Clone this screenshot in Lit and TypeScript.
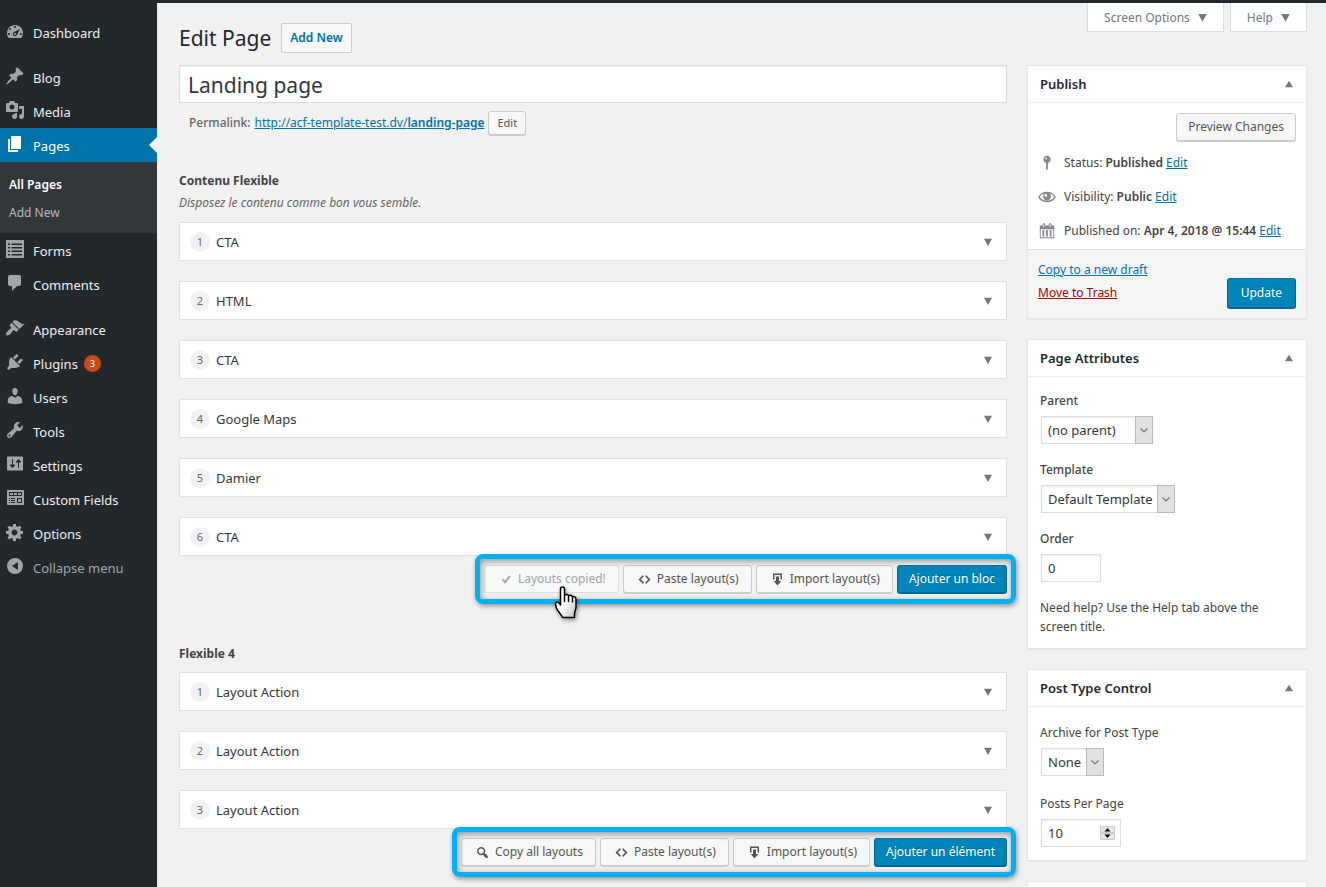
import { LitElement, html, css, svg, nothing } from "lit";
import { customElement, property } from "lit/decorators.js";
import { classMap } from "lit/directives/class-map.js";

const ICONS: Record<string, string> = {
  dashboard:
    "M3.76 17.01h12.48C17.34 15.63 18 13.9 18 12c0-4.41-3.58-8-8-8s-8 3.59-8 8c0 1.9.66 3.63 1.76 5.01zM9 6c0-.55.45-1 1-1s1 .45 1 1-.45 1-1 1-1-.45-1-1zM4 8c0-.55.45-1 1-1s1 .45 1 1-.45 1-1 1-1-.45-1-1zm4.52 3.4c.84-.83 6.51-3.5 6.51-3.5s-2.66 5.68-3.49 6.51c-.84.84-2.18.84-3.02 0-.83-.83-.83-2.18 0-3.01zM3 13c0-.55.45-1 1-1s1 .45 1 1-.45 1-1 1-1-.45-1-1zm6 0c0 .55.45 1 1 1s1-.45 1-1-.45-1-1-1-1 .45-1 1zm6 0c0-.55.45-1 1-1s1 .45 1 1-.45 1-1 1-1-.45-1-1z",
  pin:
    "M10.44 3.02l1.82-1.82 6.36 6.35-1.83 1.82c-1.05-.68-2.48-.57-3.41.36l-.75.75c-.92.93-1.04 2.35-.35 3.41l-1.83 1.82-2.41-2.41-2.8 2.79c-.42.42-3.38 2.71-3.8 2.29s1.86-3.39 2.28-3.81l2.79-2.79L4.1 9.36l1.83-1.82c1.05.69 2.48.57 3.4-.36l.75-.75c.93-.92 1.05-2.35.36-3.41z",
  media:
    "M13 11V4c0-.55-.45-1-1-1h-1.67L9 1H5L3.67 3H2c-.55 0-1 .45-1 1v7c0 .55.45 1 1 1h10c.55 0 1-.45 1-1zM7 4.5c1.38 0 2.5 1.12 2.5 2.5S8.38 9.5 7 9.5 4.5 8.38 4.5 7 5.62 4.5 7 4.5zM14 6h5v10.5c0 1.38-1.12 2.5-2.5 2.5S14 17.88 14 16.5s1.12-2.5 2.5-2.5c.17 0 .34.02.5.05V9h-3V6zm-4 8.05V13h2v3.5c0 1.38-1.12 2.5-2.5 2.5S7 17.88 7 16.5 8.12 14 9.5 14c.17 0 .34.02.5.05z",
  page: "M6 15V2h10v13H6zm-1 1h8v2H3V5h2v11z",
  forms:
    "M1 1h18v18H1V1zm2 3.500v1.500h2V4.500H3zm3.500 0v1.500H17V4.500H6.500zM3 8v1.500h2V8H3zm3.500 0v1.500H17V8H6.500zM3 11.500V13h2v-1.500H3zm3.500 0V13H17v-1.500H6.500zM3 15v1.500h2V15H3zm3.500 0v1.500H17V15H6.500z",
  comment:
    "M5 2h9c1.100 0 2 .9 2 2v7c0 1.100-.9 2-2 2h-2l-5 5v-5H5c-1.100 0-2-.9-2-2V4c0-1.100.9-2 2-2z",
  brush:
    "M14.48 11.06L7.41 3.99l1.5-1.5c.5-.56 2.3-.47 3.51.32 1.21.8 1.43 1.28 2.91 2.1 1.18.64 2.45 1.26 4.45.85zm-.71.71L6.7 4.7 4.93 6.47c-.39.39-.39 1.02 0 1.41l1.06 1.06c.39.39.39 1.03 0 1.42-.6.6-1.43 1.11-2.21 1.69-.35.26-.7.53-1.01.84C1.43 14.23.4 16.08 1.4 17.07c.99 1 2.84-.03 4.18-1.36.31-.31.58-.66.85-1.02.57-.78 1.08-1.61 1.69-2.21.39-.39 1.02-.39 1.41 0l1.06 1.06c.39.39 1.02.39 1.41 0z",
  plug:
    "M13.11 4.36L9.87 7.6 8 5.73l3.24-3.24c.35-.34 1.05-.2 1.56.32.52.51.66 1.21.31 1.55zm-8 1.77l.91-1.12 9.01 9.01-1.19.84c-.71.71-2.63 1.16-3.82 1.16H6.14L4.9 17.26c-.59.59-1.54.59-2.12 0-.59-.58-.59-1.53 0-2.12l1.24-1.24v-3.88c0-1.13.4-3.19 1.09-3.89zm7.26 3.97l3.24-3.24c.34-.35 1.04-.21 1.55.31.52.51.66 1.21.31 1.55l-3.24 3.25z",
  user:
    "M10 9.25c-2.27 0-2.73-3.44-2.73-3.44C7 4.02 7.82 2 9.97 2c2.16 0 2.98 2.02 2.71 3.81 0 0-.41 3.44-2.68 3.44zm0 2.57L12.72 10c2.39 0 4.52 2.33 4.52 4.53v2.49s-3.65 1.13-7.24 1.13c-3.65 0-7.24-1.13-7.24-1.13v-2.49c0-2.25 1.94-4.48 4.47-4.48z",
  wrench:
    "M16.68 9.77c-1.34 1.34-3.3 1.67-4.95.99l-5.41 6.52c-.99.99-2.59.99-3.58 0s-.99-2.59 0-3.57l6.52-5.42c-.68-1.65-.35-3.61.99-4.95 1.28-1.28 3.12-1.62 4.72-1.06l-2.89 2.89 2.82 2.82 2.86-2.87c.53 1.58.18 3.39-1.08 4.65zM3.81 16.21c.4.39 1.04.39 1.43 0 .4-.4.4-1.04 0-1.43-.39-.4-1.03-.4-1.43 0-.39.39-.39 1.03 0 1.43z",
  sliders:
    "M18 15.500V3.500c0-.55-.45-1-1-1H3c-.55 0-1 .45-1 1v12c0 .55.45 1 1 1h14c.55 0 1-.45 1-1zM8 10.500h2v1L7.500 14 5 11.500v-1h2V5h1v5.500zm5-2h-2v-1L13.500 5 16 7.500v1h-2V14h-1V8.500z",
  fields:
    "M19 16V3c0-.55-.45-1-1-1H3c-.55 0-1 .45-1 1v13c0 .55.45 1 1 1h15c.55 0 1-.45 1-1zM4 4h13v4H4V4zm1 1v2h3V5H5zm4 0v2h3V5H9zm4 0v2h3V5h-3zM4 10h1v1H4zm2 0h4v1H6v-1zm6 0h5v5h-5v-5zM4 12h1v1H4zm2 0h4v1H6v-1zm7-1v3h3v-3h-3zM4 14h1v1H4zm2 0h4v1H6v-1z",
  gear:
    "M18 12h-2.18c-.17.7-.44 1.35-.81 1.93l1.54 1.54-2.1 2.1-1.54-1.54c-.58.36-1.23.63-1.91.79V19H8v-2.18c-.68-.16-1.33-.43-1.91-.79l-1.54 1.54-2.12-2.12 1.54-1.54c-.36-.58-.63-1.23-.79-1.91H1V9.03h2.17c.16-.7.44-1.35.8-1.94L2.43 5.55l2.1-2.1 1.54 1.54c.58-.37 1.24-.64 1.93-.81V2h3v2.18c.68.16 1.33.43 1.91.79l1.54-1.54 2.12 2.12-1.54 1.54c.36.59.64 1.24.8 1.94H18V12zm-8.5 1.5c1.66 0 3-1.34 3-3s-1.34-3-3-3-3 1.34-3 3 1.34 3 3 3z",
  collapse: "M10 2a8 8 0 1 0 0 16 8 8 0 0 0 0-16zm3 4v8l-6-4z",
  status:
    "M14 6c0 1.86-1.28 3.41-3 3.86V16c0 1-2 2-2 2V9.86c-1.72-.45-3-2-3-3.86 0-2.21 1.79-4 4-4s4 1.79 4 4zM8 5c0 .55.45 1 1 1s1-.45 1-1-.45-1-1-1-1 .45-1 1z",
  eye:
    "M19.700 9.800C17.700 6.200 14 4.200 10 4.200S2.300 6.200.3 9.800v.4c2 3.600 5.700 5.600 9.700 5.600s7.700-2 9.700-5.600zM10 14.300c-3.200 0-6.200-1.600-8-4.300 1.200-1.800 2.900-3.100 4.900-3.800-.8.900-1.300 2-1.300 3.300 0 2.400 2 4.400 4.400 4.400s4.400-2 4.400-4.400c0-1.300-.5-2.400-1.300-3.300 2 .7 3.700 2 4.900 3.800-1.800 2.700-4.800 4.300-8 4.300zM8.600 6.600a1.600 1.600 0 1 1 0 3.200 1.600 1.600 0 0 1 0-3.200z",
  calendar:
    "M15 4h3v14H2V4h3V3c0-.83.67-1.500 1.500-1.500S8 2.170 8 3v1h4V3c0-.83.67-1.500 1.500-1.500S15 2.170 15 3v1zM6 3v2.500c0 .28.22.5.5.5s.5-.22.5-.5V3c0-.28-.22-.5-.5-.5S6 2.720 6 3zm7 0v2.500c0 .28.22.5.5.5s.5-.22.5-.5V3c0-.28-.22-.5-.5-.5s-.5.22-.5.5zm4 14V8H3v9h14zM7 16V9H5v7h2zm4 0V9H9v7h2zm4 0V9h-2v7h2z",
  search:
    "M12.14 4.18c1.87 1.87 2.11 4.75.72 6.89.12.1.22.21.36.31.2.16.47.36.81.59.34.24.56.39.66.47.42.31.73.57.94.78.32.32.6.65.84 1 .25.35.44.69.59 1.04.14.35.21.68.18 1-.02.32-.14.59-.36.81s-.49.34-.81.36c-.31.02-.65-.04-.99-.19-.35-.14-.7-.34-1.04-.59-.35-.24-.68-.52-1-.84-.21-.21-.47-.52-.77-.93-.1-.13-.25-.35-.47-.66-.22-.32-.4-.57-.56-.78-.16-.2-.29-.35-.44-.5-2.07 1.09-4.69.76-6.44-.98-2.14-2.15-2.14-5.64 0-7.78 2.15-2.15 5.63-2.15 7.78 0zm-1.41 6.36c1.36-1.37 1.36-3.58 0-4.95-1.37-1.37-3.59-1.37-4.95 0-1.37 1.37-1.37 3.58 0 4.95 1.36 1.37 3.58 1.37 4.95 0z",
  code: "M9 6l-4 4 4 4-1 2-6-6 6-6zm2 8l4-4-4-4 1-2 6 6-6 6z",
  yes: "M15.200 4.500l1.800 1.500-6.800 9H8.800L5 10.400l1.800-1.700 2.600 2.600z",
  download: "M14.010 4v6h2V2H4v8h2.010V4h8zm-2 2v6h3l-5 6-5-6h3V6h4z",
  down: "M5 6h10l-5 9z",
  up: "M5 14h10l-5-8z",
};

const icon = (name: string, size = 20) => html`
  <svg width=${size} height=${size} viewBox="0 0 20 20" fill="currentColor" aria-hidden="true">
    ${svg`<path fill-rule="evenodd" d=${ICONS[name]}></path>`}
  </svg>
`;

const shared = css`
  *,
  *::before,
  *::after {
    box-sizing: border-box;
  }
  svg {
    display: block;
    flex: none;
  }
  h1,
  h2,
  h3,
  p,
  ul,
  ol {
    margin: 0;
    padding: 0;
    list-style: none;
  }
  a {
    color: #0073aa;
  }
  button {
    font-family: inherit;
    cursor: pointer;
  }
  .button {
    display: inline-flex;
    align-items: center;
    height: 28px;
    padding: 0 11px;
    border: 1px solid #ccc;
    border-radius: 3px;
    background: #f7f7f7;
    box-shadow: 0 1px 0 #ccc;
    color: #555;
    font-size: 12px;
    line-height: 18px;
    white-space: nowrap;
  }
  .button.primary {
    border-color: #0073aa #006799 #006799;
    background: #0085ba;
    box-shadow: 0 1px 0 #006799;
    color: #fff;
    text-shadow: 0 -1px 1px #006799;
  }
  .button.small {
    height: 24px;
    padding: 0 8px;
    font-size: 11px;
  }
  .button.large {
    height: 30px;
    padding: 0 13px;
  }
`;

interface MenuEntry {
  label: string;
  icon: string;
  badge?: number;
  current?: boolean;
  gap?: boolean;
  muted?: boolean;
  children?: string[];
}

const MENU: MenuEntry[] = [
  { label: "Dashboard", icon: "dashboard" },
  { label: "Blog", icon: "pin", gap: true },
  { label: "Media", icon: "media" },
  { label: "Pages", icon: "page", current: true, children: ["All Pages", "Add New"] },
  { label: "Forms", icon: "forms" },
  { label: "Comments", icon: "comment" },
  { label: "Appearance", icon: "brush", gap: true },
  { label: "Plugins", icon: "plug", badge: 3 },
  { label: "Users", icon: "user" },
  { label: "Tools", icon: "wrench" },
  { label: "Settings", icon: "sliders" },
  { label: "Custom Fields", icon: "fields" },
  { label: "Options", icon: "gear" },
  { label: "Collapse menu", icon: "collapse", muted: true },
];

@customElement("admin-menu")
export class AdminMenu extends LitElement {
  static styles = [
    shared,
    css`
      :host {
        display: block;
        flex: none;
        width: 157px;
        padding-top: 12px;
        background: #23282d;
      }
      .gap {
        margin-top: 11px;
      }
      .item {
        position: relative;
        display: flex;
        width: 100%;
        height: 34px;
        padding: 0 0 0 5px;
        border: 0;
        background: none;
        color: #eee;
        font-size: 13px;
        line-height: 36px;
        text-decoration: none;
      }
      .item svg {
        margin: 6px 8px 0 0;
        color: #a0a5aa;
      }
      .muted {
        color: #a0a5aa;
      }
      .current {
        background: #0073aa;
        color: #fff;
      }
      .current svg {
        color: #fff;
      }
      .current::after {
        content: "";
        position: absolute;
        top: 9px;
        right: 0;
        border: 8px solid transparent;
        border-right-color: #f1f1f1;
        border-left-width: 0;
      }
      .badge {
        height: 17px;
        min-width: 17px;
        margin: 9px 0 0 6px;
        border-radius: 9px;
        background: #ca4a1f;
        color: #fff;
        font-size: 9px;
        line-height: 17px;
        text-align: center;
      }
      .submenu {
        padding: 9px 0 6px;
        background: #32373c;
      }
      .submenu a {
        display: block;
        padding-left: 9px;
        color: #b4b9be;
        font-size: 12px;
        line-height: 28px;
        text-decoration: none;
      }
      .submenu li:first-child a {
        color: #fff;
        font-weight: 600;
      }
    `,
  ];

  render() {
    return html`
      <nav aria-label="Main menu">
        <ul>
          ${MENU.map(
            (entry) => html`
              <li class=${classMap({ gap: !!entry.gap })}>
                ${entry.muted
                  ? html`<button class="item muted" type="button">
                      ${icon(entry.icon)}${entry.label}
                    </button>`
                  : html`<a class=${classMap({ item: true, current: !!entry.current })} href="#">
                      ${icon(entry.icon)}${entry.label}${entry.badge
                        ? html`<span class="badge">${entry.badge}</span>`
                        : nothing}
                    </a>`}
                ${entry.children
                  ? html`<ul class="submenu">
                      ${entry.children.map((child) => html`<li><a href="#">${child}</a></li>`)}
                    </ul>`
                  : nothing}
              </li>
            `
          )}
        </ul>
      </nav>
    `;
  }
}

@customElement("flexible-field")
export class FlexibleField extends LitElement {
  @property() label = "";
  @property() description = "";
  @property() addLabel = "";
  @property({ type: Array }) layouts: string[] = [];
  @property({ type: Boolean }) copied = false;

  static styles = [
    shared,
    css`
      :host {
        display: block;
      }
      .label {
        color: #444;
        font-size: 12px;
        font-weight: 700;
        line-height: 20px;
      }
      .description {
        margin: 2px 0 9px;
        color: #666;
        font-size: 12px;
        font-style: italic;
        line-height: 20px;
      }
      .layouts {
        display: grid;
        gap: 20px;
        margin-top: 8px;
      }
      .layout {
        display: flex;
        align-items: center;
        height: 39px;
        padding: 0 10px;
        border: 1px solid #e1e1e1;
        background: #fff;
        color: #32373c;
        font-size: 13px;
      }
      .order {
        width: 20px;
        height: 20px;
        margin-right: 6px;
        border-radius: 50%;
        background: #f1f1f1;
        color: #666;
        font-size: 11px;
        line-height: 20px;
        text-align: center;
      }
      .name {
        flex: 1;
      }
      .toggle {
        padding: 0;
        border: 0;
        background: none;
        color: #72777c;
      }
      .actions {
        position: relative;
        display: flex;
        gap: 4px;
        width: max-content;
        margin: 9px 0 0 auto;
      }
      .actions::after {
        content: "";
        position: absolute;
        inset: -11px -9px;
        border: 5px solid #00b0f0;
        border-radius: 8px;
        box-shadow: 1px 2px 5px rgba(0, 0, 0, 0.4), inset 1px 2px 6px rgba(0, 0, 0, 0.4);
        pointer-events: none;
      }
      .button svg {
        margin-right: 5px;
      }
      .icon-button {
        padding: 0 12px 0 13px;
      }
      .button:disabled {
        border-color: #ddd;
        box-shadow: none;
        color: #a0a5aa;
      }
      .pointer {
        position: absolute;
        top: 20px;
        left: 70px;
        z-index: 1;
        filter: drop-shadow(1px 2px 2px rgba(0, 0, 0, 0.4));
      }
    `,
  ];

  private renderPointer() {
    return html`
      <svg class="pointer" width="24" height="34" viewBox="0 0 24 34" aria-hidden="true">
        <defs>
          <linearGradient id="hand" x1="0" y1="0" x2="1" y2="1">
            <stop offset="0.5" stop-color="#fff"></stop>
            <stop offset="1" stop-color="#bbb"></stop>
          </linearGradient>
        </defs>
        <path
          d="M6.500 20V4c0-2.700 4-2.700 4 0v6.500c1-1.500 3.800-1.300 4 .5 1-1.300 3.600-.9 4 1 1-.8 3.500-.3 3.500 2v8c0 3-1.500 4.500-1.500 7v3.500H8.500c-.5-3-4.500-5-6-9.500-1.200-3.500-1.500-6 .5-6 1.800 0 2.500 1.500 3.500 3zM10.500 10.500v6M14.500 11v5.500M18.500 12.500v4.500"
          fill="url(#hand)"
          stroke="#000"
          stroke-width="1.500"
          stroke-linejoin="round"
          stroke-linecap="round"
        ></path>
      </svg>
    `;
  }

  render() {
    return html`
      <h3 class="label">${this.label}</h3>
      ${this.description ? html`<p class="description">${this.description}</p>` : nothing}
      <ol class="layouts">
        ${this.layouts.map(
          (name, i) => html`
            <li class="layout">
              <span class="order">${i + 1}</span>
              <span class="name">${name}</span>
              <button class="toggle" type="button" aria-label="Toggle layout">
                ${icon("down", 16)}
              </button>
            </li>
          `
        )}
      </ol>
      <div class="actions">
        ${this.copied
          ? html`<button class="button icon-button" type="button" disabled>
                ${icon("yes", 15)}Layouts copied!</button
              >${this.renderPointer()}`
          : html`<button class="button icon-button" type="button">
              ${icon("search", 15)}Copy all layouts
            </button>`}
        <button class="button icon-button" type="button">${icon("code", 15)}Paste layout(s)</button>
        <button class="button icon-button" type="button">
          ${icon("download", 15)}Import layout(s)
        </button>
        <button class="button primary" type="button">${this.addLabel}</button>
      </div>
    `;
  }
}

@customElement("meta-box")
export class MetaBox extends LitElement {
  @property() heading = "";

  static styles = [
    shared,
    css`
      :host {
        display: block;
        border: 1px solid #e5e5e5;
        background: #fff;
        box-shadow: 0 1px 1px rgba(0, 0, 0, 0.04);
      }
      .head {
        display: flex;
        align-items: center;
        justify-content: space-between;
        height: 37px;
        padding: 0 9px 0 12px;
        border-bottom: 1px solid #eee;
      }
      .heading {
        color: #23282d;
        font-size: 13px;
        font-weight: 600;
      }
      .toggle {
        padding: 0;
        border: 0;
        background: none;
        color: #72777c;
      }
    `,
  ];

  render() {
    return html`
      <div class="head">
        <h2 class="heading">${this.heading}</h2>
        <button class="toggle" type="button" aria-label="Toggle panel">${icon("up", 16)}</button>
      </div>
      <slot></slot>
    `;
  }
}

@customElement("app-root")
export class AppRoot extends LitElement {
  static styles = [
    shared,
    css`
      :host {
        display: flex;
        flex-direction: column;
        height: 100vh;
        overflow: hidden;
        background: #f1f1f1;
        color: #444;
        font-family: "Noto Sans", "Open Sans", sans-serif;
        font-size: 12px;
        line-height: 18px;
      }
      .topbar {
        flex: none;
        height: 3px;
        background: #23282d;
      }
      .frame {
        display: flex;
        flex: 1;
        min-height: 0;
      }
      .content {
        flex: 1;
        min-width: 0;
        padding: 0 19px 0 22px;
      }
      .header {
        display: flex;
        align-items: flex-start;
        height: 62px;
      }
      .title {
        flex: 1;
        display: flex;
        align-items: center;
        gap: 10px;
        padding-top: 20px;
      }
      .title h1 {
        color: #23282d;
        font-size: 21px;
        font-weight: 400;
        line-height: 30px;
      }
      .add-new {
        padding: 0 8px;
        border: 1px solid #ccc;
        border-radius: 2px;
        background: #f7f7f7;
        font-size: 12px;
        font-weight: 600;
        line-height: 28px;
        text-decoration: none;
      }
      .tabs {
        display: flex;
        gap: 6px;
      }
      .tab {
        display: flex;
        align-items: center;
        gap: 4px;
        height: 29px;
        padding: 0 12px 0 16px;
        border: 1px solid #ddd;
        border-top: 0;
        background: #fff;
        box-shadow: 0 1px 1px -1px rgba(0, 0, 0, 0.1);
        color: #72777c;
        font-size: 12px;
      }
      .columns {
        display: flex;
        align-items: flex-start;
        gap: 20px;
      }
      .primary-column {
        flex: 1;
        min-width: 0;
      }
      .side-column {
        display: grid;
        flex: none;
        gap: 20px;
        width: 280px;
      }
      input,
      select {
        border: 1px solid #ddd;
        border-radius: 0;
        background: #fff;
        box-shadow: inset 0 1px 2px rgba(0, 0, 0, 0.07);
        color: #32373c;
        font-family: inherit;
        font-size: 13px;
      }
      .post-title {
        display: block;
        width: 100%;
        height: 38px;
        padding: 4px 8px 2px;
        font-size: 21px;
      }
      .permalink {
        display: flex;
        align-items: center;
        gap: 4px;
        margin-top: 8px;
        padding-left: 10px;
        color: #666;
        font-weight: 500;
      }
      .permalink a {
        font-weight: 400;
      }
      .permalink a strong {
        font-weight: 600;
      }
      .fields {
        display: grid;
        gap: 51px;
        margin-top: 36px;
      }
      .publish {
        display: flex;
        flex-direction: column;
        padding: 10px 10px 8px;
      }
      .preview {
        align-self: flex-end;
      }
      .facts {
        display: grid;
        gap: 14px;
        margin-top: 12px;
      }
      .fact {
        display: flex;
        align-items: center;
        gap: 8px;
        height: 20px;
        white-space: nowrap;
      }
      .fact svg {
        color: #82878c;
      }
      .fact strong {
        font-weight: 600;
      }
      .publish-foot {
        display: flex;
        align-items: flex-end;
        justify-content: space-between;
        padding: 10px;
        border-top: 1px solid #ddd;
        background: #f5f5f5;
      }
      .links {
        display: grid;
        gap: 3px;
        line-height: 20px;
        padding-bottom: 5px;
      }
      .trash {
        color: #a00;
      }
      .attributes {
        display: grid;
        justify-items: start;
        gap: 16px;
        padding: 14px 12px 12px;
      }
      .control {
        display: grid;
        justify-items: start;
        gap: 5px;
        line-height: 20px;
      }
      .control.strong label {
        font-weight: 500;
      }
      .hint {
        line-height: 19px;
      }
      .box {
        display: grid;
        margin-left: 1px;
      }
      .box > * {
        grid-area: 1 / 1;
      }
      select,
      .number {
        height: 28px;
        margin: 0;
        padding: 0 6px;
        appearance: none;
      }
      select {
        padding-right: 21px;
      }
      #parent {
        min-width: 112px;
      }
      .number {
        width: 60px;
        appearance: textfield;
      }
      .number.wide {
        width: 80px;
      }
      .number::-webkit-inner-spin-button {
        appearance: none;
        margin: 0;
      }
      .arrow {
        display: grid;
        place-items: center;
        justify-self: end;
        width: 18px;
        height: 28px;
        border: 1px solid #bbb;
        background: #e1e1e1;
        color: #777;
        pointer-events: none;
      }
      .spinner {
        align-self: center;
        justify-self: end;
        margin-right: 6px;
        pointer-events: none;
      }
      .type-control {
        display: grid;
        justify-items: start;
        gap: 18px;
        padding: 16px 12px 13px;
      }
      .empty-body {
        height: 60px;
      }
    `,
  ];

  private select(id: string, value: string) {
    return html`
      <span class="box">
        <select id=${id}>
          <option>${value}</option>
        </select>
        <span class="arrow">
          <svg width="8" height="5" viewBox="0 0 8 5" fill="none" aria-hidden="true">
            <path d="M.5.5L4 4 7.500.5" stroke="currentColor" stroke-width="1.200"></path>
          </svg>
        </span>
      </span>
    `;
  }

  render() {
    return html`
      <div class="topbar"></div>
      <div class="frame">
        <admin-menu></admin-menu>
        <main class="content">
          <div class="header">
            <div class="title">
              <h1>Edit Page</h1>
              <a class="add-new" href="#">Add New</a>
            </div>
            <div class="tabs">
              <button class="tab" type="button">Screen Options ${icon("down", 17)}</button>
              <button class="tab" type="button">Help ${icon("down", 17)}</button>
            </div>
          </div>
          <div class="columns">
            <div class="primary-column">
              <input class="post-title" type="text" aria-label="Title" value="Landing page" />
              <div class="permalink">
                <span>Permalink:</span>
                <a href="#">http://acf-template-test.dv/<strong>landing-page</strong></a>
                <button class="button small" type="button">Edit</button>
              </div>
              <div class="fields">
                <flexible-field
                  label="Contenu Flexible"
                  description="Disposez le contenu comme bon vous semble."
                  addLabel="Ajouter un bloc"
                  copied
                  .layouts=${["CTA", "HTML", "CTA", "Google Maps", "Damier", "CTA"]}
                ></flexible-field>
                <flexible-field
                  label="Flexible 4"
                  addLabel="Ajouter un élément"
                  .layouts=${["Layout Action", "Layout Action", "Layout Action"]}
                ></flexible-field>
              </div>
            </div>
            <div class="side-column">
              <meta-box heading="Publish">
                <div class="publish">
                  <button class="button preview" type="button">Preview Changes</button>
                  <div class="facts">
                    <div class="fact">
                      ${icon("status", 18)}
                      <span>Status: <strong>Published</strong> <a href="#">Edit</a></span>
                    </div>
                    <div class="fact">
                      ${icon("eye", 18)}
                      <span>Visibility: <strong>Public</strong> <a href="#">Edit</a></span>
                    </div>
                    <div class="fact">
                      ${icon("calendar", 18)}
                      <span
                        >Published on: <strong>Apr 4, 2018 @ 15:44</strong> <a href="#">Edit</a></span
                      >
                    </div>
                  </div>
                </div>
                <div class="publish-foot">
                  <div class="links">
                    <a href="#">Copy to a new draft</a>
                    <a class="trash" href="#">Move to Trash</a>
                  </div>
                  <button class="button primary large" type="button">Update</button>
                </div>
              </meta-box>
              <meta-box heading="Page Attributes">
                <div class="attributes">
                  <div class="control strong">
                    <label for="parent">Parent</label>
                    ${this.select("parent", "(no parent)")}
                  </div>
                  <div class="control strong">
                    <label for="template">Template</label>
                    ${this.select("template", "Default Template")}
                  </div>
                  <div class="control strong">
                    <label for="order">Order</label>
                    <span class="box"
                      ><input class="number" id="order" type="text" value="0"
                    /></span>
                  </div>
                  <p class="hint">Need help? Use the Help tab above the screen title.</p>
                </div>
              </meta-box>
              <meta-box heading="Post Type Control">
                <div class="type-control">
                  <div class="control">
                    <label for="archive">Archive for Post Type</label>
                    ${this.select("archive", "None")}
                  </div>
                  <div class="control">
                    <label for="per-page">Posts Per Page</label>
                    <span class="box">
                      <input class="number wide" id="per-page" type="number" value="10" />
                      <svg class="spinner" width="15" height="14" viewBox="0 0 15 14" aria-hidden="true">
                        <path d="M.5.5h14v6H.5zM.5 7.500h14v6H.5z" fill="#e6e6e6" stroke="#ccc"></path>
                        <path d="M4.500 5.500l3-3.500 3 3.500zM4.500 8.500l3 3.500 3-3.500z" fill="#000"></path>
                      </svg>
                    </span>
                  </div>
                </div>
              </meta-box>
              <meta-box><div class="empty-body"></div></meta-box>
            </div>
          </div>
        </main>
      </div>
    `;
  }
}
